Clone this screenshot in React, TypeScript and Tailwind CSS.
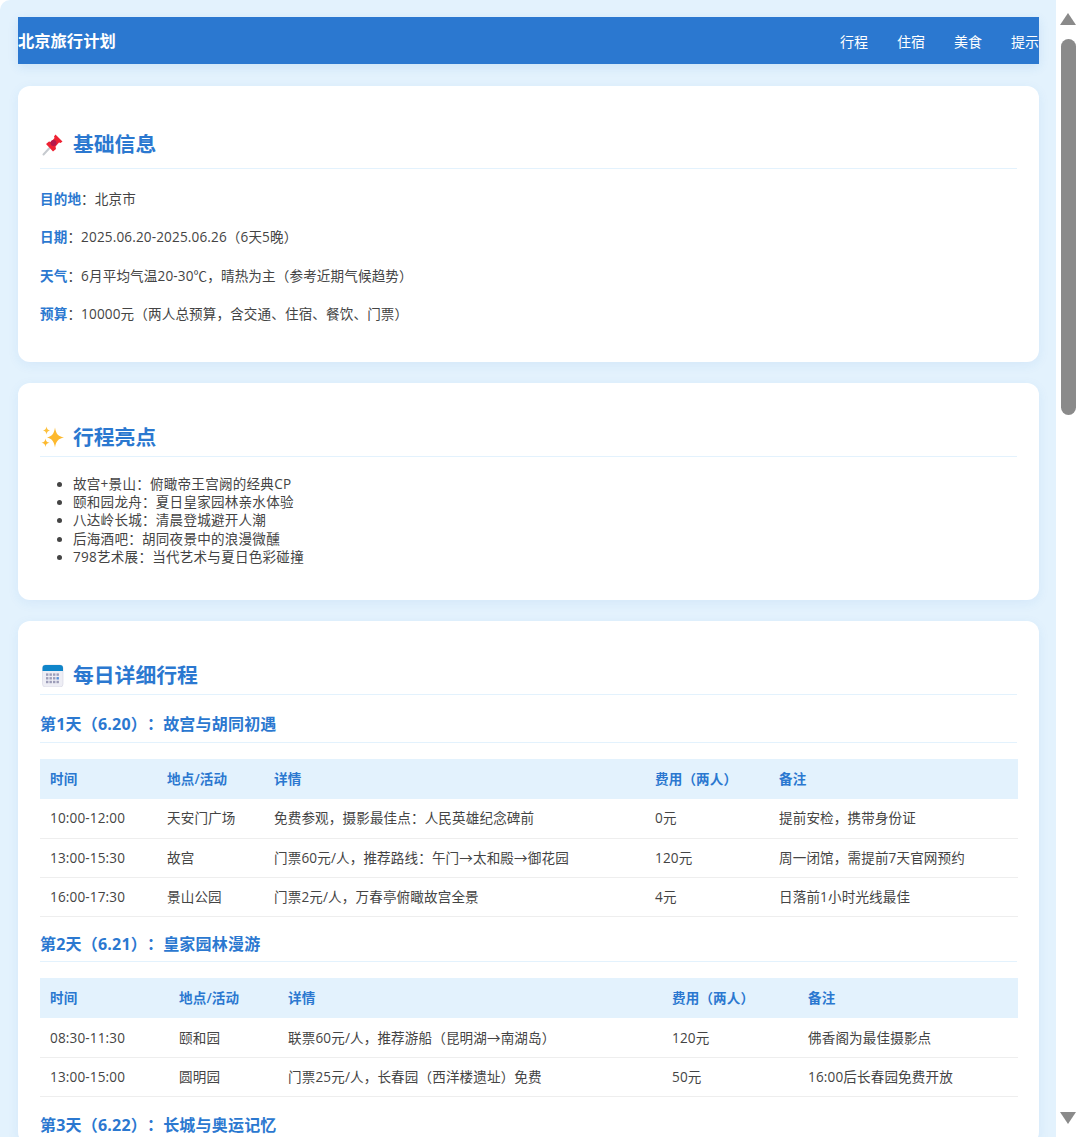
import React from "react";

const font = '"Open Sans","Noto Sans CJK SC",sans-serif';

function Pin() {
  return (
    <svg width="24" height="24" viewBox="0 0 24 24" className="shrink-0">
      <path d="M3.5 21.5 L9.5 15" stroke="#c6cacf" strokeWidth="2" strokeLinecap="round" />
      <path d="M15.5 1.5 L22.5 8.5 L20.5 10 L19 9.5 L15.5 13.5 L16 16 L13 18.5 L6 11 L9 8.5 L11 9 L14.5 5 L14 3.5 Z" fill="#ee2233" />
      <circle cx="13.5" cy="10" r="3" fill="#b5184a" />
    </svg>
  );
}
function Sparkles() {
  return (
    <svg width="24" height="24" viewBox="0 0 24 24" className="shrink-0">
      <path d="M15 2.5 C16 9 18 11 24 12.5 C18 14 16 16 15 22.5 C14 16 12 14 7 12.5 C12 11 14 9 15 2.5 Z" fill="#fdb92e" />
      <path d="M6.5 1.5 C6.9 4 7.7 4.9 10 5.5 C7.7 6.1 6.9 7 6.5 9.5 C6.1 7 5.3 6.1 3 5.5 C5.3 4.9 6.1 4 6.5 1.5 Z" fill="#fdc13c" />
      <path d="M5.5 13.5 C5.9 16.3 6.8 17.1 9.5 17.8 C6.8 18.5 5.9 19.3 5.5 22 C5.1 19.3 4.2 18.5 1.5 17.8 C4.2 17.1 5.1 16.3 5.5 13.5 Z" fill="#fdb92e" />
    </svg>
  );
}
function Calendar() {
  const dots = [];
  for (let r = 0; r < 3; r++) for (let c = 0; c < 4; c++)
    dots.push(<rect key={r + "-" + c} x={6 + c * 3.5} y={10.4 + r * 3.7} width="2.4" height="2.4" fill={r === 1 && c === 3 ? "#5a8fd8" : "#9c9cb8"} />);
  return (
    <svg width="24" height="24" viewBox="0 0 24 24" className="shrink-0">
      <rect x="2.5" y="2" width="20.5" height="22" rx="3" fill="#eeeef5" stroke="#d5d5e2" strokeWidth="0.6" />
      <path d="M2.5 8 V5 a3 3 0 0 1 3 -3 H20 a3 3 0 0 1 3 3 V8 Z" fill="#0f85c9" />
      {dots}
    </svg>
  );
}

function H2({ icon, children, cls }: { icon: React.ReactNode; children: React.ReactNode; cls: string }) {
  return (
    <h2 className={"flex items-center gap-[9px] border-b border-[#e3f2fd] text-[20.8px] leading-[31px] font-bold text-[#2b78d0] " + cls}>
      <span className="flex w-[24px] justify-center">{icon}</span>
      {children}
    </h2>
  );
}

function Info({ k, v, cls }: { k: string; v: string; cls: string }) {
  return (
    <p className={"text-[13.55px] leading-[20px] tracking-[0.15px] text-[#444] " + cls}>
      <span className="font-semibold text-[#2b78d0]">{k}</span>：{v}
    </p>
  );
}

function Table({ widths, rows }: { widths: string[]; rows: string[][] }) {
  const head = ["时间", "地点/活动", "详情", "费用（两人）", "备注"];
  return (
    <table className="w-full table-fixed border-collapse text-[13.55px] tracking-[0.15px] text-[#444]">
      <colgroup>
        {widths.map((w, i) => <col key={i} style={{ width: w }} />)}
      </colgroup>
      <thead>
        <tr className="h-[40px] bg-[#e3f2fd] text-left">
          {head.map((h) => <th key={h} className="px-[10px] font-semibold text-[#2b78d0]">{h}</th>)}
        </tr>
      </thead>
      <tbody>
        {rows.map((r, i) => (
          <tr key={i} className="h-[39.3px] border-b border-[#eeeeee]">
            {r.map((c, j) => <td key={j} className="truncate px-[10px]">{c}</td>)}
          </tr>
        ))}
      </tbody>
    </table>
  );
}

function H3({ children, cls }: { children: React.ReactNode; cls: string }) {
  return <h3 className={"border-b border-[#e3f2fd] text-[16px] leading-[24px] font-bold tracking-[0.2px] text-[#2b78d0] " + cls}>{children}</h3>;
}

const cardCls = "rounded-[12px] bg-white px-[22px] shadow-[0_3px_12px_rgba(43,120,208,0.08)]";

export default function App() {
  return (
    <div className="flex h-[1137px] w-[1080px] overflow-hidden bg-white [text-spacing-trim:space-all]" style={{ fontFamily: font }}>
      <main className="flex h-full w-[1056px] flex-col overflow-hidden rounded-tl-[10px] bg-[#e3f2fd] pt-[17px] pr-[17px] pl-[18px]">
        <header className="flex h-[47px] shrink-0 items-center justify-between overflow-hidden bg-[#2b78d0] text-white shadow-[0_3px_10px_rgba(43,120,208,0.12)]">
          <div className="pt-[2px] text-[16.3px] font-bold">北京旅行计划</div>
          <nav className="flex gap-[29px] pt-[2px] text-[14px] whitespace-nowrap">
            <span>行程</span><span>住宿</span><span>美食</span><span className="w-[28px]">提示</span>
          </nav>
        </header>

        <section className={cardCls + " mt-[22px] h-[276px] shrink-0 pt-[42px]"}>
          <H2 icon={<Pin />} cls="h-[41px] pb-[7px]">基础信息</H2>
          <Info k="目的地" v="北京市" cls="mt-[20px]" />
          <Info k="日期" v="2025.06.20-2025.06.26（6天5晚）" cls="mt-[18.3px]" />
          <Info k="天气" v="6月平均气温20-30℃，晴热为主（参考近期气候趋势）" cls="mt-[18.3px]" />
          <Info k="预算" v="10000元（两人总预算，含交通、住宿、餐饮、门票）" cls="mt-[18.3px]" />
        </section>

        <section className={cardCls + " mt-[21px] h-[217px] shrink-0 pt-[38px]"}>
          <H2 icon={<Sparkles />} cls="h-[36px] pb-[3px]">行程亮点</H2>
          <ul className="mt-[18px] list-disc pl-[33px] text-[13.55px] leading-[18.2px] tracking-[0.25px] text-[#444]">
            <li>故宫+景山：俯瞰帝王宫阙的经典CP</li>
            <li>颐和园龙舟：夏日皇家园林亲水体验</li>
            <li>八达岭长城：清晨登城避开人潮</li>
            <li>后海酒吧：胡同夜景中的浪漫微醺</li>
            <li>798艺术展：当代艺术与夏日色彩碰撞</li>
          </ul>
        </section>

        <section className={cardCls + " mt-[21px] shrink-0 pt-[38px]"}>
          <H2 icon={<Calendar />} cls="h-[36px] pb-[3px]">每日详细行程</H2>
          <H3 cls="mt-[17px] h-[31px]">第1天（6.20）：故宫与胡同初遇</H3>
          <div className="mt-[16px]">
            <Table
              widths={["117px", "107px", "381px", "124px", "249px"]}
              rows={[
                ["10:00-12:00", "天安门广场", "免费参观，摄影最佳点：人民英雄纪念碑前", "0元", "提前安检，携带身份证"],
                ["13:00-15:30", "故宫", "门票60元/人，推荐路线：午门→太和殿→御花园", "120元", "周一闭馆，需提前7天官网预约"],
                ["16:00-17:30", "景山公园", "门票2元/人，万春亭俯瞰故宫全景", "4元", "日落前1小时光线最佳"],
              ]}
            />
          </div>
          <H3 cls="mt-[15px] h-[30px]">第2天（6.21）：皇家园林漫游</H3>
          <div className="mt-[16px]">
            <Table
              widths={["129px", "109px", "384px", "136px", "220px"]}
              rows={[
                ["08:30-11:30", "颐和园", "联票60元/人，推荐游船（昆明湖→南湖岛）", "120元", "佛香阁为最佳摄影点"],
                ["13:00-15:00", "圆明园", "门票25元/人，长春园（西洋楼遗址）免费", "50元", "16:00后长春园免费开放"],
              ]}
            />
          </div>
          <H3 cls="mt-[16px] h-[31px]">第3天（6.22）：长城与奥运记忆</H3>
        </section>
      </main>

      <aside className="flex h-full w-[24px] shrink-0 flex-col items-center bg-white pt-[13px]">
        <div className="h-0 w-0 border-x-[8px] border-b-[12px] border-x-transparent border-b-[#8a8a8a]" />
        <div className="mt-[14px] h-[376px] w-[15px] rounded-full bg-[#8a8a8a]" />
        <div className="mt-auto mb-[13px] h-0 w-0 border-x-[8px] border-t-[12px] border-x-transparent border-t-[#8a8a8a]" />
      </aside>
    </div>
  );
}
